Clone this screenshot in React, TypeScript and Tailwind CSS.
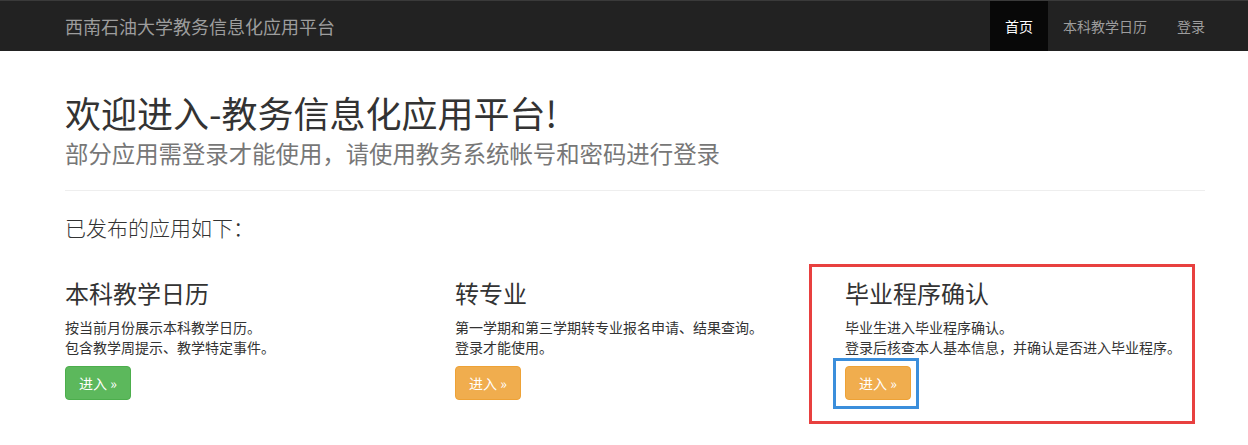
import React from "react";

const font = { fontFamily: '"Noto Sans CJK SC", "Noto Sans", sans-serif' };

export default function App() {
  const cols = [
    {
      title: "本科教学日历",
      lines: ["按当前月份展示本科教学日历。", "包含教学周提示、教学特定事件。"],
      btn: "bg-[#5cb85c] border-[#4cae4c]",
    },
    {
      title: "转专业",
      lines: ["第一学期和第三学期转专业报名申请、结果查询。", "登录才能使用。"],
      btn: "bg-[#f0ad4e] border-[#eea236]",
    },
    {
      title: "毕业程序确认",
      lines: ["毕业生进入毕业程序确认。", "登录后核查本人基本信息，并确认是否进入毕业程序。"],
      btn: "bg-[#f0ad4e] border-[#eea236]",
    },
  ];
  return (
    <div className="relative w-[1248px] h-[445px] bg-white text-[#333] overflow-hidden" style={font}>
      <nav className="h-[51px] bg-[#222] border-t border-[#3a3a3a]">
        <div className="ml-[50px] w-[1170px] px-[15px] h-full flex items-center justify-between">
          <div className="text-[18px] leading-[50px] text-[#9d9d9d]">西南石油大学教务信息化应用平台</div>
          <ul className="flex h-full -mr-[15px] text-[14px]">
            <li className="px-[15px] h-full flex items-center bg-[#080808] text-white">首页</li>
            <li className="px-[15px] h-full flex items-center text-[#9d9d9d]">本科教学日历</li>
            <li className="px-[15px] h-full flex items-center text-[#9d9d9d]">登录</li>
          </ul>
        </div>
      </nav>
      <main className="ml-[50px] w-[1170px] px-[15px]">
        <h1 className="mt-[41px] text-[36px] leading-[40px] font-normal text-[#333]">欢迎进入-教务信息化应用平台!</h1>
        <div className="mt-[8px] text-[23.4px] leading-[26px] text-[#777]">部分应用需登录才能使用，请使用教务系统帐号和密码进行登录</div>
        <hr className="mt-[24px] border-0 border-t border-[#eee]" />
        <p className="mt-[21px] text-[21px] leading-[30px] font-light text-[#333]">已发布的应用如下：</p>
        <div className="mt-[38px] grid grid-cols-3 gap-[30px]">
          {cols.map((c) => (
            <div key={c.title}>
              <h3 className="text-[24px] leading-[26px] font-normal text-[#333]">{c.title}</h3>
              <div className="mt-[11px] text-[14px] leading-[20px]">
                {c.lines.map((l) => (
                  <p key={l}>{l}</p>
                ))}
              </div>
              <button className={`mt-[9px] h-[34px] px-[13px] rounded-[4px] border text-white text-[14px] leading-[20px] ${c.btn}`}>
                进入 »
              </button>
            </div>
          ))}
        </div>
      </main>
      <div className="absolute left-[809px] top-[264px] w-[386px] h-[160px] border-[3px] border-[#e8403f]" />
      <div className="absolute left-[833px] top-[358px] w-[86px] h-[51px] border-[3px] border-[#3b8edb]" />
    </div>
  );
}
